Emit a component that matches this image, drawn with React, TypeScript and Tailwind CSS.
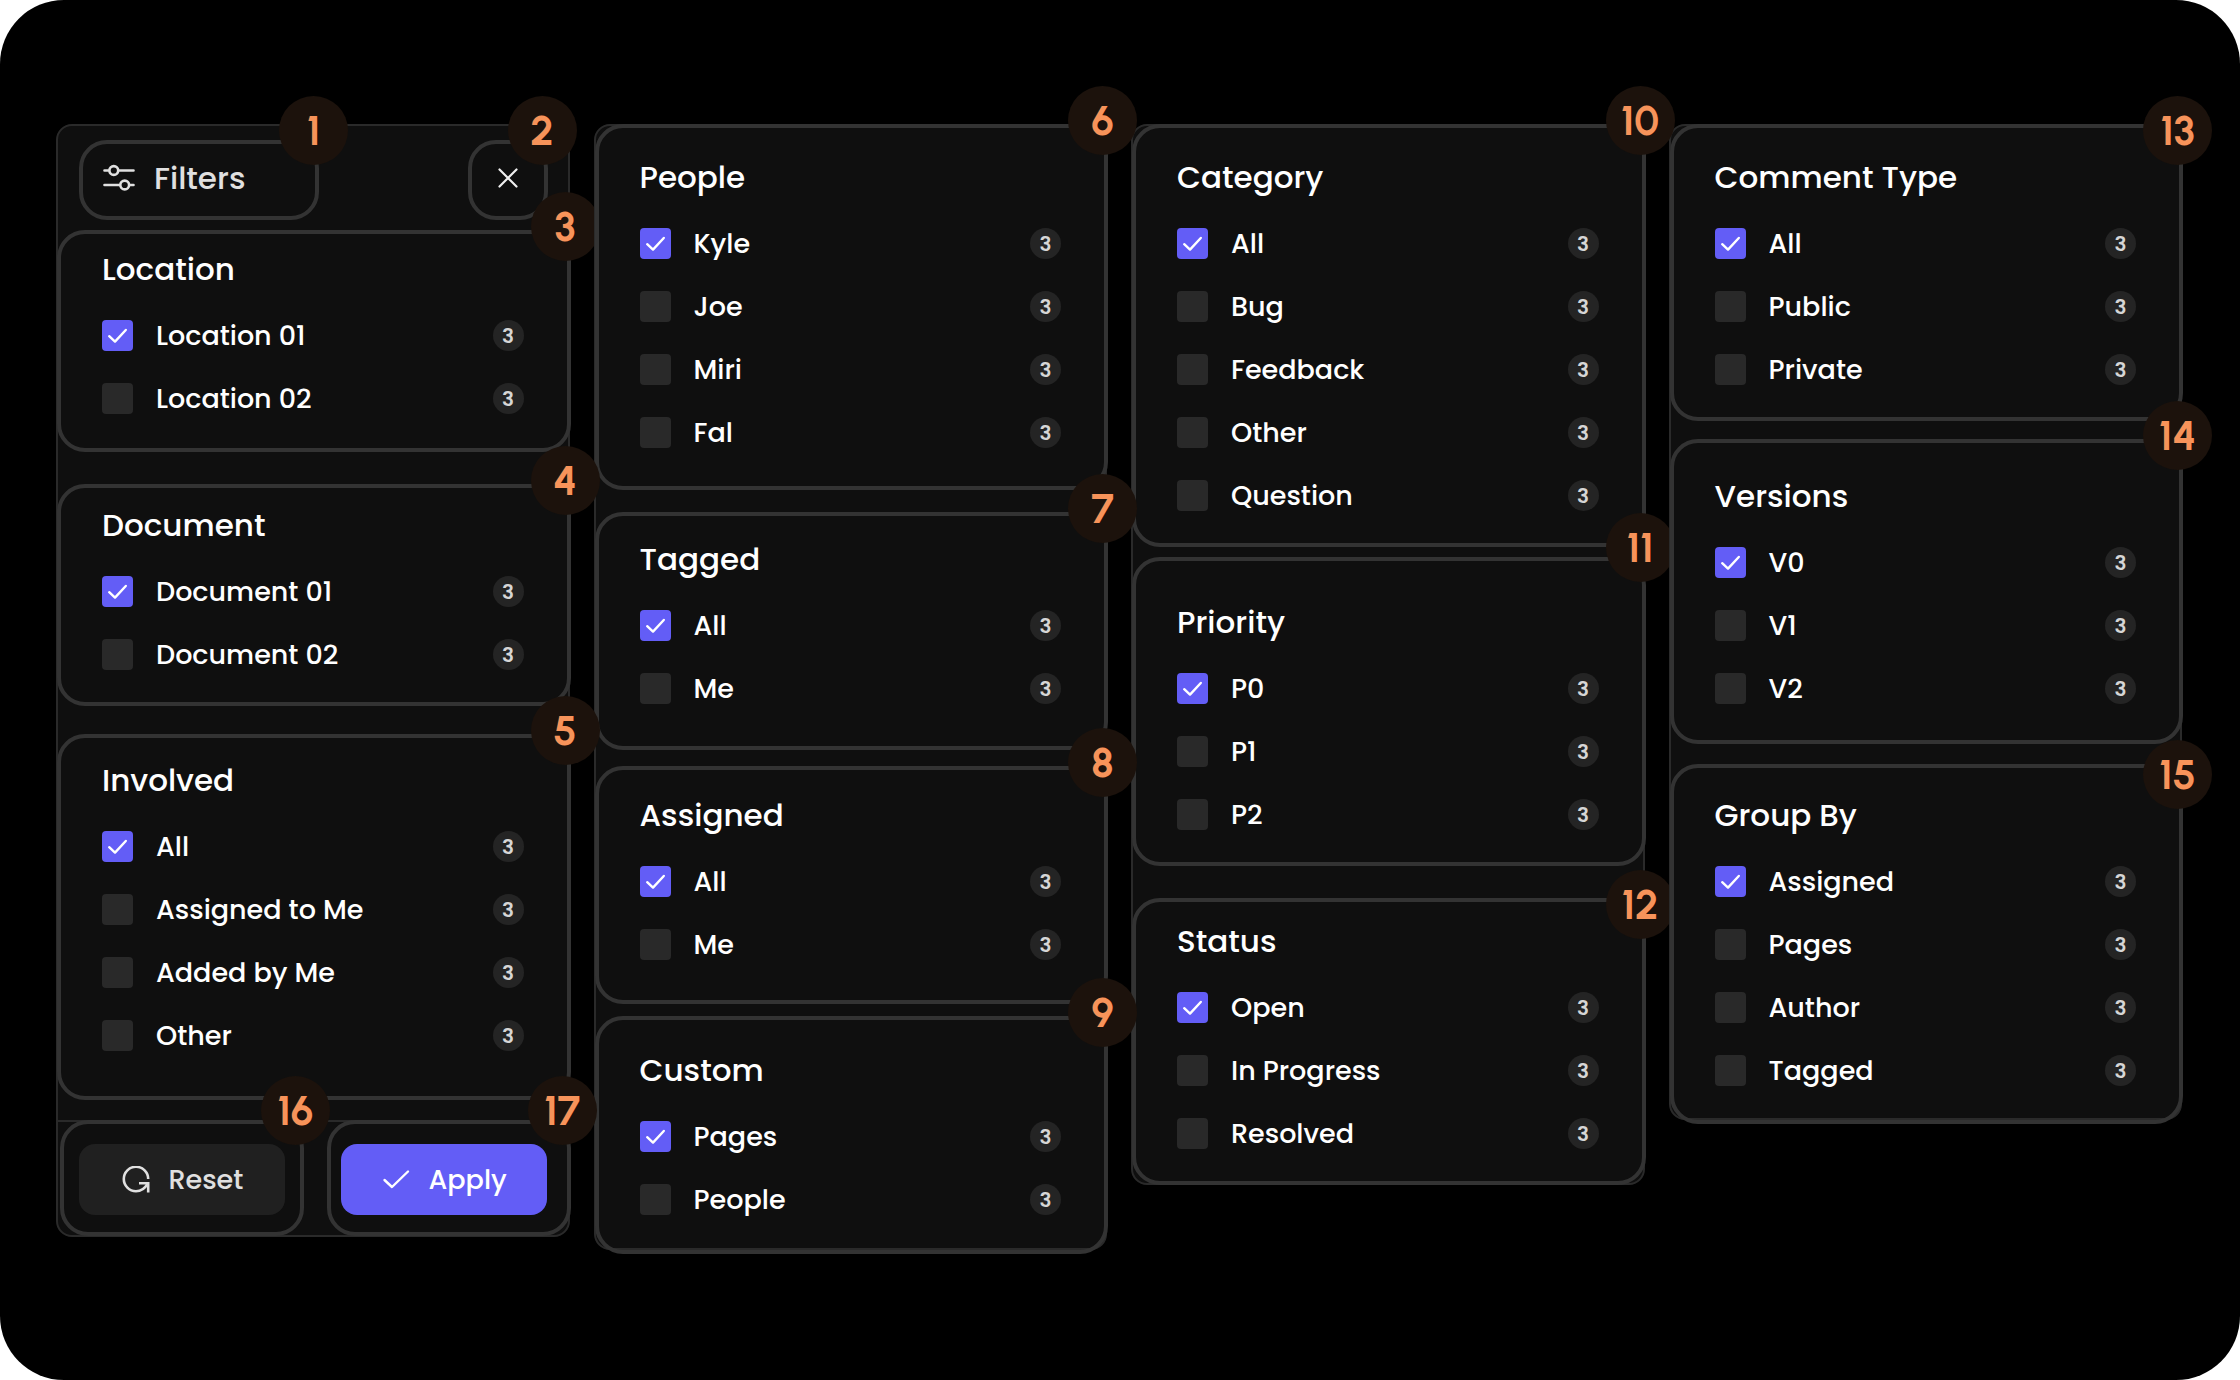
import type { ReactNode } from "react";

type Section = {
  number: number;
  title: string;
  options: string[];
  box: string;
  badge: string;
};

const column1: Section[] = [
  { number: 3, title: "Location", options: ["Location 01", "Location 02"], box: "mt-2.5 pt-4.5 pb-8.5", badge: "-top-10.5" },
  { number: 4, title: "Document", options: ["Document 01", "Document 02"], box: "mt-8 pt-5 pb-8", badge: "-top-10.5 z-10" },
  { number: 5, title: "Involved", options: ["All", "Assigned to Me", "Added by Me", "Other"], box: "mt-7 pt-[25px] pb-[45px]", badge: "-top-10.5 z-10" },
];

const column2: Section[] = [
  { number: 6, title: "People", options: ["Kyle", "Joe", "Miri", "Fal"], box: "-mt-0.5 pt-8 pb-9.5", badge: "-top-10.5 z-10" },
  { number: 7, title: "Tagged", options: ["All", "Me"], box: "mt-5.5 pt-6.5 pb-10.5", badge: "-top-10.5 z-10" },
  { number: 8, title: "Assigned", options: ["All", "Me"], box: "mt-4 pt-7 pb-10", badge: "-top-10.5 z-10" },
  { number: 9, title: "Custom", options: ["Pages", "People"], box: "mt-3 -mb-1.5 pt-[33px] pb-[35px]", badge: "-top-10.5 z-10" },
];

const column3: Section[] = [
  { number: 10, title: "Category", options: ["All", "Bug", "Feedback", "Other", "Question"], box: "-mt-0.5 pt-8 pb-8", badge: "-top-10.5 z-10" },
  { number: 11, title: "Priority", options: ["P0", "P1", "P2"], box: "mt-2.5 pt-11 pb-8", badge: "-top-12" },
  { number: 12, title: "Status", options: ["Open", "In Progress", "Resolved"], box: "mt-8 -mb-0.5 pt-5.5 pb-8", badge: "-top-8" },
];

const column4: Section[] = [
  { number: 13, title: "Comment Type", options: ["All", "Public", "Private"], box: "-mt-0.5 pt-8 pb-8", badge: "-top-8 z-10" },
  { number: 14, title: "Versions", options: ["V0", "V1", "V2"], box: "mt-4.5 pt-9 pb-9", badge: "-top-10.5 z-10" },
  { number: 15, title: "Group By", options: ["Assigned", "Pages", "Author", "Tagged"], box: "mt-5 -mb-1.5 pt-7.5 pb-8.5", badge: "-top-7 z-10" },
];

function Badge({ children, className }: { children: ReactNode; className: string }) {
  return (
    <span
      className={`absolute flex size-[69px] items-center justify-center rounded-full bg-[#1c120c] font-['Urbanist','Outfit','Poppins','Inter',sans-serif] text-[41px] leading-none font-bold text-[#f7935a] ${className}`}
    >
      {children}
    </span>
  );
}

function Option({ label, checked }: { label: string; checked: boolean }) {
  return (
    <li>
      <label className="flex h-[31px] items-center gap-[23px]">
        <span className="grid size-[31px] shrink-0 place-items-center">
          <input
            type="checkbox"
            defaultChecked={checked}
            className="peer col-start-1 row-start-1 size-[31px] appearance-none rounded bg-[#292929] checked:bg-[#635df6]"
          />
          <svg
            viewBox="0 0 31 31"
            className="pointer-events-none invisible col-start-1 row-start-1 size-[31px] peer-checked:visible"
            fill="none"
            stroke="#fff"
            strokeWidth="2.4"
            strokeLinecap="round"
            strokeLinejoin="round"
            aria-hidden="true"
          >
            <path d="M7.2 16.2 13 21.6 23.8 10" />
          </svg>
        </span>
        <span className="flex-1 text-[27px] leading-[31px] font-medium text-white">{label}</span>
        <span className="flex size-[31px] items-center justify-center rounded-full bg-[#242424] text-[20px] leading-none font-semibold text-[#d6d6d6]">
          3
        </span>
      </label>
    </li>
  );
}

function FilterSection({ section }: { section: Section }) {
  return (
    <section
      className={`relative -mr-[3px] -ml-px rounded-[28px] border-4 border-[#333333] pr-[43px] pl-[41px] ${section.box}`}
    >
      <h2 className="text-[31px] leading-[34px] font-medium text-white">{section.title}</h2>
      <ul className="mt-[34px] flex flex-col gap-8">
        {section.options.map((option, index) => (
          <Option key={option} label={option} checked={index === 0} />
        ))}
      </ul>
      <Badge className={`-right-[33px] ${section.badge}`}>{section.number}</Badge>
    </section>
  );
}

function Panel({ children }: { children: ReactNode }) {
  return (
    <div className="relative flex flex-col rounded-2xl border-2 border-[#2a2a2a] bg-[#0f0f0f]">{children}</div>
  );
}

function SectionList({ sections }: { sections: Section[] }) {
  return (
    <>
      {sections.map((section) => (
        <FilterSection key={section.title} section={section} />
      ))}
    </>
  );
}

export default function App() {
  return (
    <div className="min-h-screen bg-white font-['Poppins','Inter',sans-serif]">
      <main className="min-h-screen rounded-[64px] bg-black pt-[124px] pr-[58px] pb-32 pl-14">
        <div className="grid grid-cols-4 items-start gap-6">
          <Panel>
            <header className="flex justify-between pt-3.5 pr-5 pl-[21px]">
              <div className="relative flex h-20 w-60 items-center gap-[19px] rounded-[28px] border-4 border-[#333333] pb-1 pl-5">
                <svg viewBox="0 0 32 32" className="size-8" fill="none" stroke="#e0e0e0" strokeWidth="2.6" strokeLinecap="round" aria-hidden="true">
                  <path d="M1.5 8.5H5.5M16 8.5h14.5" />
                  <circle cx="10.8" cy="8.5" r="4.4" />
                  <path d="M1.5 23H16.5M27 23h3.5" />
                  <circle cx="21.7" cy="23" r="4.4" />
                </svg>
                <h1 className="text-[31px] leading-[34px] font-medium text-[#e0e0e0]">Filters</h1>
                <Badge className="-top-12 -right-[33px] z-10">1</Badge>
              </div>
              <div className="relative flex size-20 rounded-[28px] border-4 border-[#333333]">
                <button type="button" aria-label="Close filters" className="flex flex-1 items-center justify-center pb-1">
                  <svg viewBox="0 0 20 20" className="size-5" fill="none" stroke="#f0f0f0" strokeWidth="2.2" strokeLinecap="round" aria-hidden="true">
                    <path d="M1.5 1.5 18.5 18.5M18.5 1.5 1.5 18.5" />
                  </svg>
                </button>
                <Badge className="-top-12 -right-[33px] z-10">2</Badge>
              </div>
            </header>
            <SectionList sections={column1} />
            <footer className="mt-5 flex gap-[23px] border-t-2 border-[#2a2a2a] pl-0.5">
              <div className="relative -mt-0.5 -mb-px flex-1 rounded-[28px] border-4 border-[#333333] px-[15px] pt-5 pb-[17px]">
                <button type="button" className="flex h-[71px] w-full items-center justify-center gap-[18px] rounded-2xl bg-[#202020] pt-px pl-0.5 text-[27px] font-medium text-[#e0e0e0]">
                  <svg viewBox="0 0 28 28" className="size-7" fill="none" stroke="currentColor" strokeWidth="2.6" strokeLinejoin="miter" aria-hidden="true">
                    <path d="M26.2 13A12.2 12.2 0 1 0 14 25.2C19.6 25.2 23.2 22 25.6 17.6" />
                    <path d="M17 17.2H26.2V26.4" />
                  </svg>
                  Reset
                </button>
                <Badge className="-top-12 -right-7.5 z-10">16</Badge>
              </div>
              <div className="relative -mt-0.5 -mr-[3px] -mb-px flex-1 rounded-[28px] border-4 border-[#333333] pt-5 pr-5 pb-[17px] pl-2.5">
                <button type="button" className="flex h-[71px] w-full items-center justify-center gap-[18px] rounded-2xl bg-[#635df6] pt-px pl-0.5 text-[27px] font-medium text-white">
                  <svg viewBox="0 0 28 28" className="size-7" fill="none" stroke="currentColor" strokeWidth="2.4" strokeLinecap="round" strokeLinejoin="round" aria-hidden="true">
                    <path d="M2.5 14 10 21 26 5.5" />
                  </svg>
                  Apply
                </button>
                <Badge className="-top-12 -right-7.5 z-10">17</Badge>
              </div>
            </footer>
          </Panel>
          <Panel>
            <SectionList sections={column2} />
          </Panel>
          <Panel>
            <SectionList sections={column3} />
          </Panel>
          <Panel>
            <SectionList sections={column4} />
          </Panel>
        </div>
      </main>
    </div>
  );
}
